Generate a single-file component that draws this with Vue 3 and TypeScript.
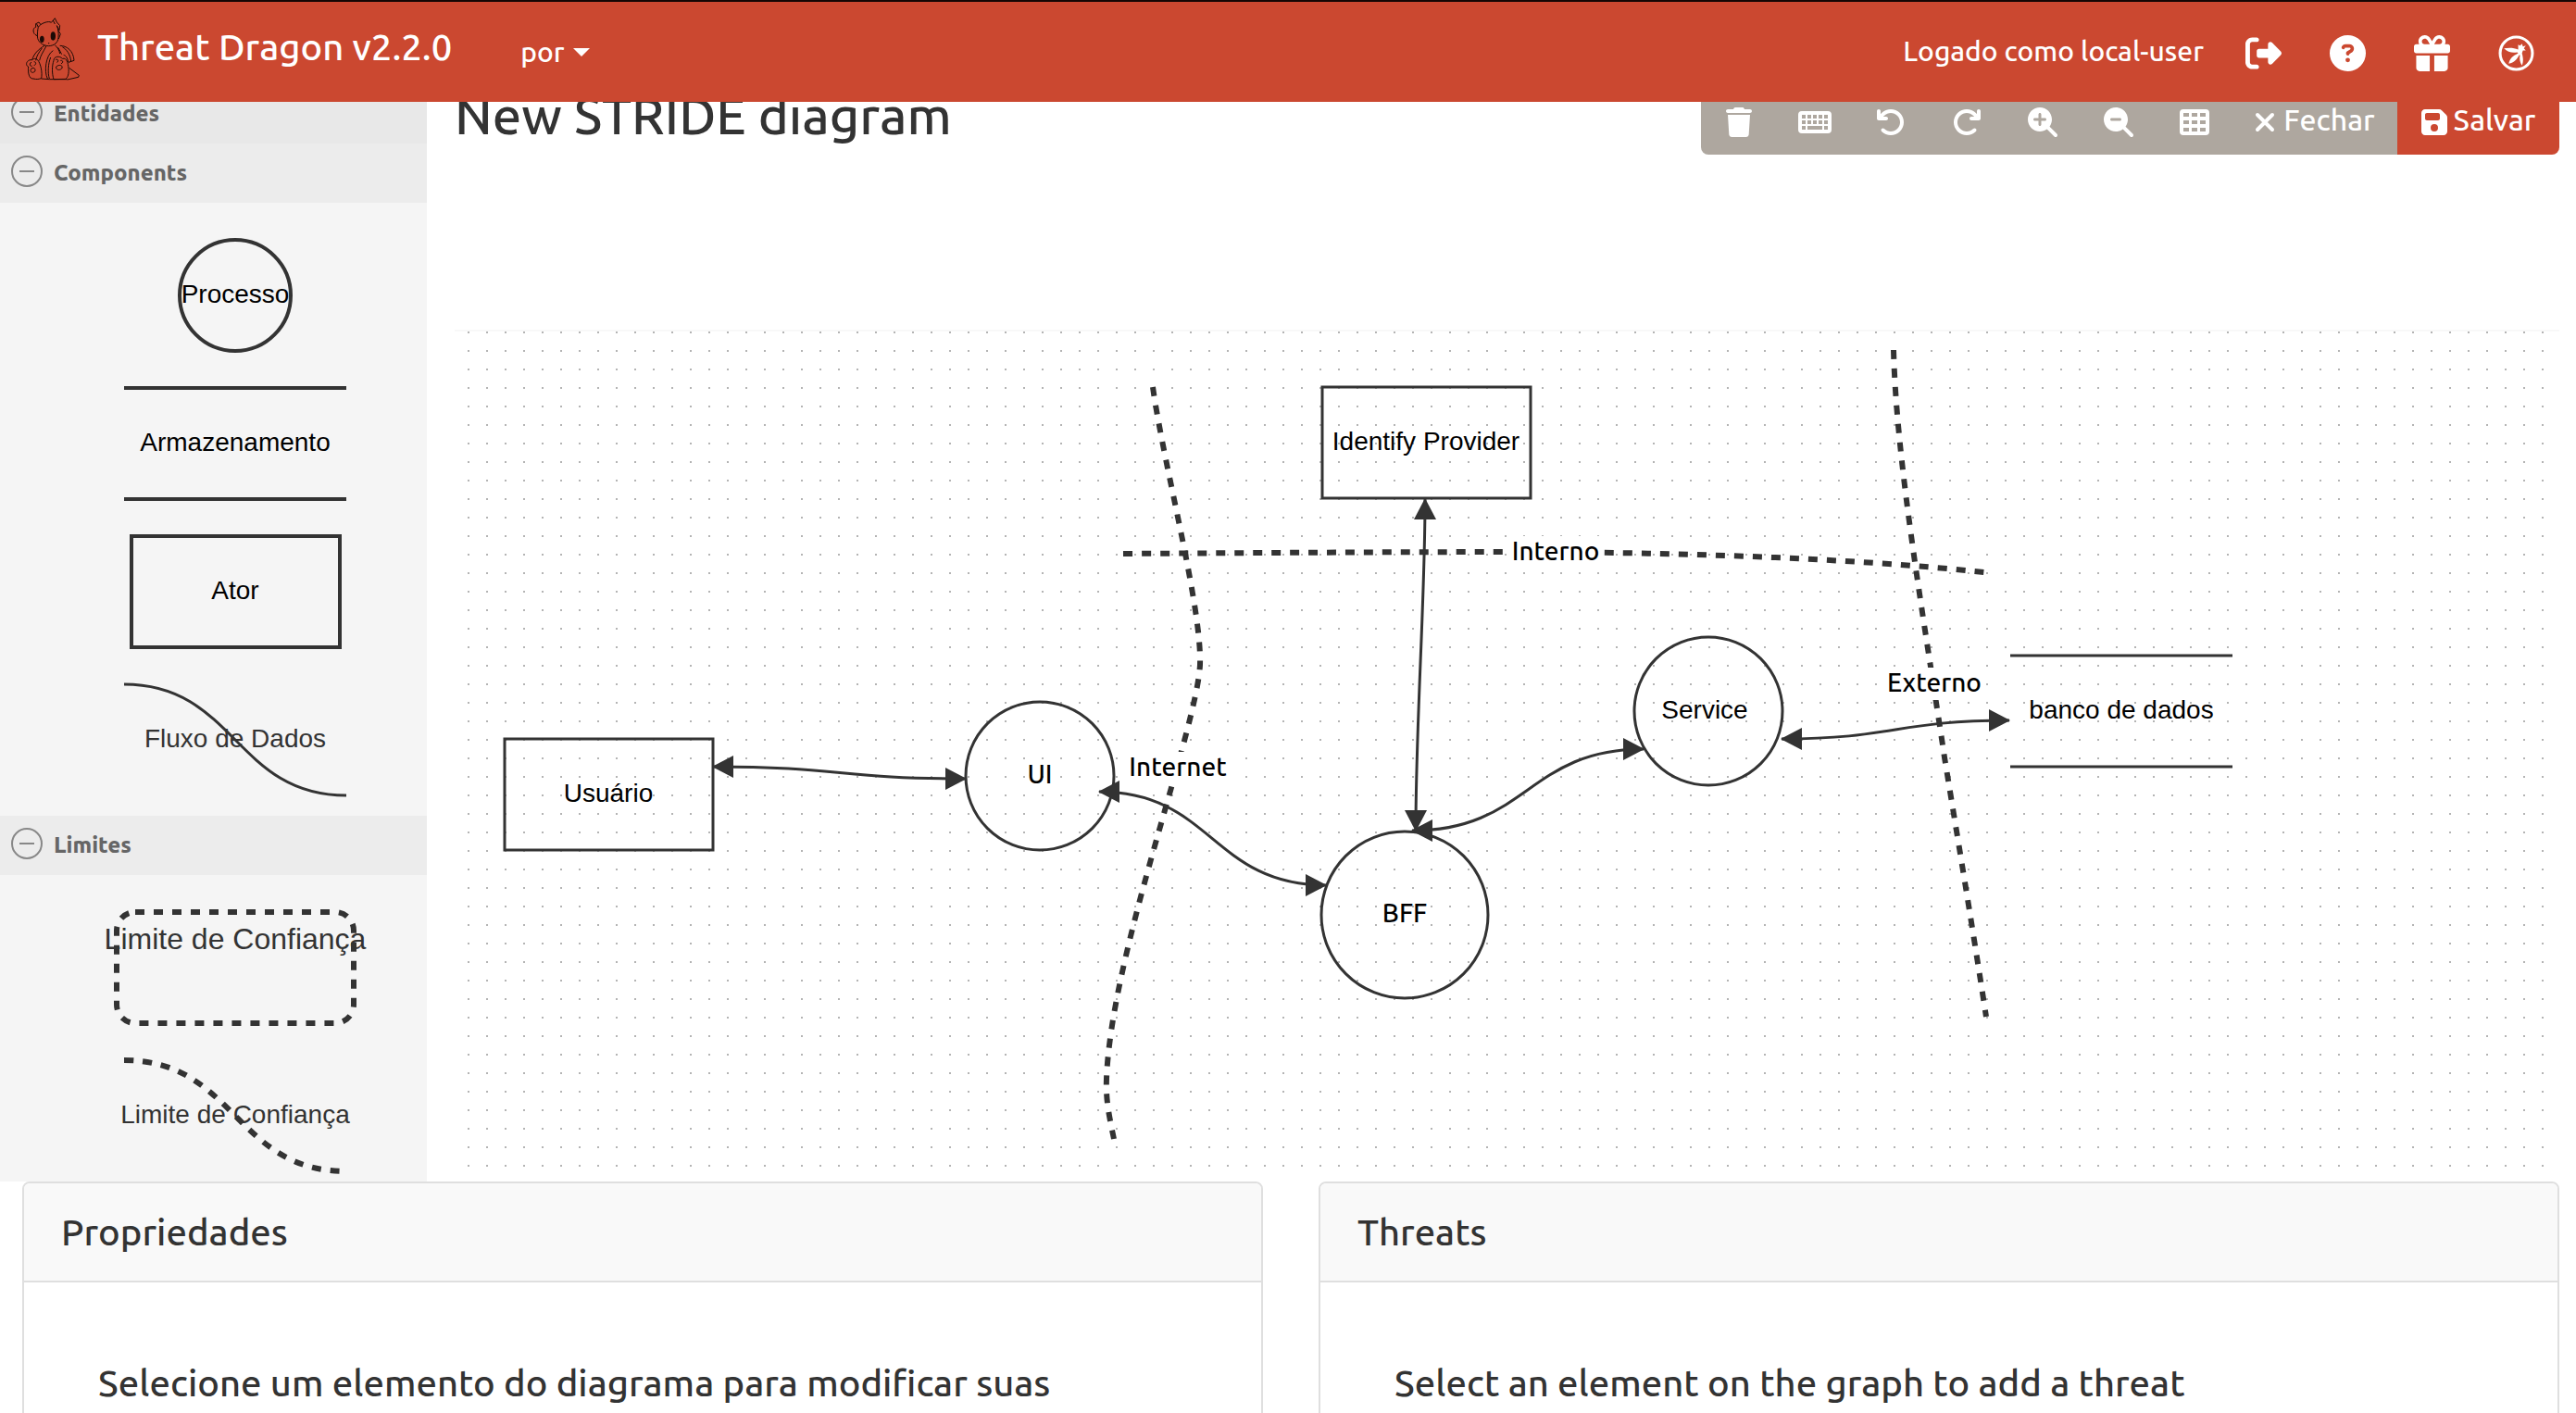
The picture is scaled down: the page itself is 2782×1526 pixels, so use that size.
<script setup lang="ts">
import { ref } from 'vue'

interface Action {
  label: string
  viewBox: string
  path: string
}
interface Flow {
  id: string
  d: string
}
interface Boundary extends Flow {
  name: string
  x: number
  y: number
  width: number
}

const language = ref('por')

const lens =
  'M416 208c0 45.9-14.9 88.3-40 122.7L502.6 457.4c12.5 12.5 12.5 32.8 0 45.3s-32.8 12.5-45.3 0L330.7 376c-34.4 25.2-76.8 40-122.7 40C93.1 416 0 322.9 0 208S93.1 0 208 0S416 93.1 416 208z'

const actions: Action[] = [
  {
    label: 'Excluir',
    viewBox: '-32 0 512 512',
    path: 'M135.2 17.7L128 32 32 32C14.3 32 0 46.3 0 64S14.3 96 32 96l384 0c17.7 0 32-14.3 32-32s-14.3-32-32-32l-96 0-7.2-14.3C307.4 6.8 296.3 0 284.2 0L163.8 0c-12.1 0-23.2 6.8-28.6 17.7zM416 128L32 128 53.2 467c1.6 25.3 22.6 45 47.9 45l245.8 0c25.3 0 46.3-19.7 47.9-45L416 128z',
  },
  {
    label: 'Atalhos',
    viewBox: '2 0 32 32',
    path: 'M4 4h28a4 4 0 0 1 4 4v16a4 4 0 0 1-4 4H4a4 4 0 0 1-4-4V8a4 4 0 0 1 4-4zM4 8v4h4v-4zM10 8v4h4v-4zM16 8v4h4v-4zM22 8v4h4v-4zM28 8v4h4v-4zM4 14v4h4v-4zM10 14v4h4v-4zM16 14v4h4v-4zM22 14v4h4v-4zM28 14v4h4v-4zM4 20v4h4v-4zM10 20v4h16v-4zM28 20v4h4v-4z',
  },
  {
    label: 'Desfazer',
    viewBox: '0 0 512 512',
    path: 'M125.7 160l50.3 0c17.7 0 32 14.3 32 32s-14.3 32-32 32L48 224c-17.7 0-32-14.3-32-32L16 64c0-17.7 14.3-32 32-32s32 14.3 32 32l0 51.2L97.6 97.6c87.5-87.5 229.3-87.5 316.8 0s87.5 229.3 0 316.8s-229.3 87.5-316.8 0c-12.5-12.5-12.5-32.8 0-45.3s32.8-12.5 45.3 0c62.5 62.5 163.8 62.5 226.3 0s62.5-163.8 0-226.3s-163.8-62.5-226.3 0L125.7 160z',
  },
  {
    label: 'Refazer',
    viewBox: '0 0 512 512',
    path: 'M386.3 160L336 160c-17.7 0-32 14.3-32 32s14.3 32 32 32l128 0c17.7 0 32-14.3 32-32l0-128c0-17.7-14.3-32-32-32s-32 14.3-32 32l0 51.2L414.4 97.6c-87.5-87.5-229.3-87.5-316.8 0s-87.5 229.3 0 316.8s229.3 87.5 316.8 0c12.5-12.5 12.5-32.8 0-45.3s-32.8-12.5-45.3 0c-62.5 62.5-163.8 62.5-226.3 0s-62.5-163.8 0-226.3s163.8-62.5 226.3 0L386.3 160z',
  },
  {
    label: 'Aumentar zoom',
    viewBox: '0 0 512 512',
    path: lens + 'M184 296c0 13.3 10.7 24 24 24s24-10.7 24-24l0-64 64 0c13.3 0 24-10.7 24-24s-10.7-24-24-24l-64 0 0-64c0-13.3-10.7-24-24-24s-24 10.7-24 24l0 64-64 0c-13.3 0-24 10.7-24 24s10.7 24 24 24l64 0 0 64z',
  },
  {
    label: 'Diminuir zoom',
    viewBox: '0 0 512 512',
    path: lens + 'M136 184c-13.3 0-24 10.7-24 24s10.7 24 24 24l144 0c13.3 0 24-10.7 24-24s-10.7-24-24-24l-144 0z',
  },
  {
    label: 'Grade',
    viewBox: '0 0 32 32',
    path: 'M4 2h24a4 4 0 0 1 4 4v20a4 4 0 0 1-4 4H4a4 4 0 0 1-4-4V6a4 4 0 0 1 4-4zM4 6v4h6v-4zM13 6v4h6v-4zM22 6v4h6v-4zM4 14v4h6v-4zM13 14v4h6v-4zM22 14v4h6v-4zM4 22v4h6v-4zM13 22v4h6v-4zM22 22v4h6v-4z',
  },
]

const flows: Flow[] = [
  { id: 'user-ui', d: 'M770 828C907 828 907 841 1043 841' },
  { id: 'ui-bff', d: 'M1187 855C1309 855 1309 956 1432 956' },
  { id: 'idp-bff', d: 'M1539 539C1539 650 1529 780 1529 897' },
  { id: 'bff-service', d: 'M1525 897C1650 897 1650 809 1775 809' },
  { id: 'service-db', d: 'M1924 798C2047 798 2047 778 2170 778' },
]

const boundaries: Boundary[] = [
  {
    id: 'internet',
    name: 'Internet',
    x: 1272,
    y: 838,
    width: 110,
    d: 'M1245 418C1257 504 1298 655 1296 718C1292 790 1200 1030 1195 1165C1194 1188 1198 1206 1203 1230',
  },
  {
    id: 'interno',
    name: 'Interno',
    x: 1680,
    y: 605,
    width: 104,
    d: 'M1213 598C1363 597 1510 596 1660 596C1810 597 1990 602 2143 618',
  },
  {
    id: 'externo',
    name: 'Externo',
    x: 2089,
    y: 747,
    width: 106,
    d: 'M2045 378C2048 500 2078 670 2100 818C2115 910 2130 1000 2145 1098',
  },
]

const cards = [
  { title: 'Propriedades', text: 'Selecione um elemento do diagrama para modificar suas' },
  { title: 'Threats', text: 'Select an element on the graph to add a threat' },
]
</script>

<template>
  <div class="app">
    <header class="navbar">
      <a class="brand" href="#">
        <svg class="logo" viewBox="0 0 240 240" aria-hidden="true">
          <g fill="none" stroke="#1c0a06" stroke-width="3" stroke-linejoin="round">
            <path d="M64 52C62 60 60 75 62 88C66 104 84 113 98 113C116 112 128 102 129 86C131 70 128 55 124 47M64 52C70 40 98 30 106 37M64 52L58 40L66 36L72 44M106 37L118 23L124 36L134 47L132 62L124 47M56 52C46 54 46 70 54 76L60 80M56 40L56 52M112 30L118 42M128 62L136 74L130 90" />
            <path d="M84 112C64 124 50 138 44 158M76 120C66 134 58 146 56 160M90 113C80 132 70 146 68 160M44 158C26 156 20 176 32 180C30 200 34 220 48 219C60 222 66 220 74 218C78 200 72 170 62 158C56 152 48 154 44 158M42 166C34 168 36 180 44 178M50 164C58 164 58 174 50 176M42 186C50 180 60 190 50 198C40 202 36 192 42 186" />
            <path d="M112 128C88 142 82 196 94 219M104 150C96 170 94 200 100 219M118 110C126 118 132 126 134 138M134 112C156 112 178 128 180 160L162 166C158 152 154 144 146 142M142 116C156 124 168 140 170 164M128 118L140 140M114 160C114 146 134 144 142 154C158 150 160 170 162 184C164 202 160 216 152 220L114 221C108 202 108 178 114 160M120 158C128 152 132 164 124 166M136 160C144 158 146 168 138 170M122 180C134 170 146 178 140 186C132 194 120 190 122 180M164 184L196 208L194 214L158 222M74 219L100 221L158 221" />
          </g>
          <ellipse cx="76" cy="91" rx="7" ry="11" fill="#1c0a06" />
          <ellipse cx="112" cy="81" rx="8" ry="14" fill="#1c0a06" />
          <circle cx="98" cy="104" r="2" fill="#1c0a06" />
        </svg>
        <span>Threat Dragon v2.2.0</span>
      </a>
      <label class="language">
        <select v-model="language" aria-label="Idioma">
          <option value="por">por</option>
          <option value="eng">eng</option>
        </select>
        <svg width="18" height="9" viewBox="0 0 18 9" aria-hidden="true"><path d="M0 0h18l-9 9z" fill="#fff" /></svg>
      </label>
      <span class="session">Logado como local-user</span>
      <nav class="links">
        <a href="#" aria-label="Sair">
          <svg viewBox="0 0 512 512"><path d="M377.9 105.9L500.7 228.7c7.2 7.2 11.3 17.1 11.3 27.3s-4.1 20.1-11.3 27.3L377.9 406.1c-6.4 6.4-15 9.9-24 9.9c-18.7 0-33.9-15.2-33.9-33.9l0-62.1-128 0c-17.7 0-32-14.3-32-32l0-64c0-17.7 14.3-32 32-32l128 0 0-62.1c0-18.7 15.2-33.9 33.9-33.9c9 0 17.6 3.6 24 9.9zM160 96L96 96c-17.7 0-32 14.3-32 32l0 256c0 17.7 14.3 32 32 32l64 0c17.7 0 32 14.3 32 32s-14.3 32-32 32l-64 0c-53 0-96-43-96-96L0 128C0 75 43 32 96 32l64 0c17.7 0 32 14.3 32 32s-14.3 32-32 32z" /></svg>
        </a>
        <a href="#" aria-label="Ajuda">
          <svg viewBox="0 0 512 512"><path fill-rule="evenodd" d="M256 512A256 256 0 1 0 256 0a256 256 0 1 0 0 512zM169.8 165.3c7.9-22.3 29.1-37.3 52.8-37.3l58.3 0c34.9 0 63.1 28.3 63.1 63.1c0 22.6-12.1 43.5-31.7 54.8L280 264.4c-.2 13-10.9 23.6-24 23.6c-13.3 0-24-10.7-24-24l0-13.5c0-8.6 4.6-16.5 12.1-20.8l44.3-25.4c4.7-2.7 7.6-7.7 7.6-13.1c0-8.4-6.8-15.1-15.1-15.1l-58.3 0c-3.4 0-6.4 2.1-7.5 5.3l-.4 1.2c-4.4 12.5-18.2 19-30.6 14.6s-19-18.2-14.6-30.6l.4-1.2zM224 352a32 32 0 1 1 64 0 32 32 0 1 1 -64 0z" /></svg>
        </a>
        <a href="#" aria-label="Novidades">
          <svg viewBox="0 0 512 512"><path d="M190.5 68.8L225.3 128l-1.3 0-72 0c-22.1 0-40-17.9-40-40s17.9-40 40-40l2.2 0c14.9 0 28.8 7.9 36.3 20.8zM64 88c0 14.4 3.5 28 9.6 40L32 128c-17.7 0-32 14.3-32 32l0 64c0 17.7 14.3 32 32 32l448 0c17.7 0 32-14.3 32-32l0-64c0-17.7-14.3-32-32-32l-41.6 0c6.1-12 9.6-25.6 9.6-40c0-48.6-39.4-88-88-88l-2.2 0c-31.9 0-61.5 16.9-77.7 44.4L256 85.5l-24.1-41C215.7 16.9 186.1 0 154.2 0L152 0C103.4 0 64 39.4 64 88zm336 0c0 22.1-17.9 40-40 40l-72 0-1.3 0 34.8-59.2C329.1 55.9 342.9 48 357.8 48l2.2 0c22.1 0 40 17.9 40 40zM32 288l0 176c0 26.5 21.5 48 48 48l144 0 0-224L32 288zM288 512l144 0c26.5 0 48-21.5 48-48l0-176-192 0 0 224z" /></svg>
        </a>
        <a href="#" aria-label="OWASP">
          <svg viewBox="0 0 38 38">
            <circle cx="19" cy="19" r="17" fill="none" stroke="#fff" stroke-width="3" />
            <path d="M21 10l2 1l2-2l1 3l3-1l-2 3l2 2l-3 0l-1 3c1 4 2 8 0 13c-2-3-3-7-2-11l-1 0c-2 4-5 8-11 9c1-5 4-8 10-11l-1-1c-5 1-10 0-14-4c5-1 10-1 15 1z" />
          </svg>
        </a>
      </nav>
    </header>

    <main class="content">
      <div class="workspace">
        <aside class="stencil">
          <button class="group group-first" type="button">
            <svg width="36" height="36" viewBox="0 0 36 36" aria-hidden="true"><circle cx="18" cy="18" r="16" /><path d="M10 18h16" /></svg>
            <span>Entidades</span>
          </button>
          <button class="group" type="button">
            <svg width="36" height="36" viewBox="0 0 36 36" aria-hidden="true"><circle cx="18" cy="18" r="16" /><path d="M10 18h16" /></svg>
            <span>Components</span>
          </button>
          <svg class="shapes" width="461" height="662" viewBox="0 0 461 662">
            <g fill="none" stroke="#333" stroke-width="4">
              <circle cx="254" cy="100" r="60" />
              <path d="M134 200h240M134 320h240" />
              <rect x="142" y="360" width="225" height="120" />
              <path d="M134 520C254 520 254 640 374 640" stroke-width="3" />
            </g>
            <text x="254" y="108">Processo</text>
            <text x="254" y="268">Armazenamento</text>
            <text x="254" y="428">Ator</text>
            <text x="254" y="588" class="soft">Fluxo de Dados</text>
          </svg>
          <button class="group" type="button">
            <svg width="36" height="36" viewBox="0 0 36 36" aria-hidden="true"><circle cx="18" cy="18" r="16" /><path d="M10 18h16" /></svg>
            <span>Limites</span>
          </button>
          <svg class="shapes" width="461" height="331" viewBox="0 0 461 331">
            <g class="dashed">
              <rect x="126" y="40" width="256" height="120" rx="20" />
              <path d="M134 200C254 200 254 320 374 320" />
            </g>
            <text x="254" y="80" class="soft large">Limite de Confiança</text>
            <text x="254" y="268" class="soft">Limite de Confiança</text>
          </svg>
        </aside>

        <section class="editor">
          <div class="titlebar">
            <h1>New STRIDE diagram</h1>
            <div class="toolbar">
              <button v-for="a in actions" :key="a.label" type="button" class="tool" :aria-label="a.label">
                <svg :viewBox="a.viewBox"><path fill-rule="evenodd" :d="a.path" /></svg>
              </button>
              <button type="button" class="tool close">
                <svg class="cross" viewBox="0 0 22 22"><path d="M3 3l16 16M19 3l-16 16" /></svg>
                <span>Fechar</span>
              </button>
              <button type="button" class="tool save">
                <svg class="floppy" viewBox="0 0 448 512"><path fill-rule="evenodd" d="M64 32C28.7 32 0 60.7 0 96L0 416c0 35.3 28.7 64 64 64l320 0c35.3 0 64-28.7 64-64l0-242.7c0-17-6.7-33.3-18.7-45.3L352 50.7C340 38.7 323.7 32 306.7 32L64 32zm0 96c0-17.7 14.3-32 32-32l192 0c17.7 0 32 14.3 32 32l0 64c0 17.7-14.3 32-32 32L96 224c-17.7 0-32-14.3-32-32l0-64zM224 288a64 64 0 1 1 0 128 64 64 0 1 1 0-128z" /></svg>
                <span>Salvar</span>
              </button>
            </div>
          </div>

          <svg class="canvas">
            <defs>
              <pattern id="dots" x="14" y="0" width="20" height="20" patternUnits="userSpaceOnUse">
                <rect width="2" height="2" fill="#b4b4b4" />
              </pattern>
              <marker id="arrow" markerUnits="userSpaceOnUse" markerWidth="24" markerHeight="24" refX="22" refY="12" orient="auto-start-reverse">
                <path d="M0 0L23 12L0 24z" fill="#333" />
              </marker>
            </defs>
            <rect width="100%" height="100%" fill="url(#dots)" />
            <g transform="translate(-491 -358)">
              <g class="node">
                <rect x="545" y="798" width="225" height="120" />
                <circle cx="1123" cy="838" r="80" />
                <rect x="1428" y="418" width="225" height="120" />
                <circle cx="1517" cy="988" r="90" />
                <circle cx="1845" cy="768" r="80" />
                <path d="M2171 708h240M2171 828h240" />
              </g>
              <g class="dashed">
                <path v-for="b in boundaries" :key="b.id" :d="b.d" />
              </g>
              <g class="node">
                <path v-for="f in flows" :key="f.id" :d="f.d" marker-start="url(#arrow)" marker-end="url(#arrow)" />
              </g>
              <g v-for="b in boundaries" :key="b.id">
                <rect :x="b.x - b.width / 2" :y="b.y - 26" :width="b.width" height="35" fill="#fff" />
                <text :x="b.x" :y="b.y" class="label">{{ b.name }}</text>
              </g>
              <text x="657" y="866">Usuário</text>
              <text x="1123" y="846" class="label">UI</text>
              <text x="1540" y="486">Identify Provider</text>
              <text x="1517" y="996" class="label">BFF</text>
              <text x="1841" y="776">Service</text>
              <text x="2291" y="776">banco de dados</text>
            </g>
          </svg>
        </section>
      </div>

      <div class="cards">
        <section v-for="c in cards" :key="c.title" class="card">
          <h2>{{ c.title }}</h2>
          <p>{{ c.text }}</p>
        </section>
      </div>
    </main>
  </div>
</template>

<style>
body {
  margin: 0;
}
</style>

<style scoped>
.app {
  height: 100vh;
  overflow: hidden;
  background: #fff;
  color: #333;
  font-family: Ubuntu, 'Noto Sans', sans-serif;
  font-weight: 480;
}
.navbar {
  position: relative;
  z-index: 1;
  display: flex;
  align-items: center;
  height: 110px;
  padding: 0 45px 0 20px;
  box-sizing: border-box;
  border-top: 2px solid #150604;
  background: #cb4830;
  color: #fff;
  font-size: 30px;
}
.brand {
  display: flex;
  align-items: center;
  gap: 5px;
  margin-bottom: 8px;
  color: #fff;
  font-size: 40px;
  text-decoration: none;
}
.logo {
  width: 80px;
  height: 80px;
}
.brand span {
  padding-bottom: 4px;
}
.language {
  display: flex;
  align-items: center;
  gap: 9px;
  margin-left: 74px;
}
.language select {
  appearance: none;
  field-sizing: content;
  padding: 0;
  border: 0;
  background: none;
  color: #fff;
  font: inherit;
}
.session {
  margin-left: auto;
  padding-bottom: 2px;
}
.links {
  display: flex;
  gap: 52px;
  margin-left: 45px;
  padding-top: 2px;
}
.links svg {
  display: block;
  width: 39px;
  height: 39px;
  fill: #fff;
}
.content {
  display: flex;
  flex-direction: column;
  margin-top: -19px;
}
.workspace {
  display: flex;
  gap: 30px;
  padding-right: 18px;
}
.stencil {
  width: 461px;
  flex: none;
  background: #f5f5f5;
}
.group {
  display: flex;
  align-items: center;
  gap: 11px;
  width: 100%;
  height: 64px;
  padding: 0 11px 4px;
  border: 0;
  background: #ececec;
  color: #666;
  font: 800 24px Ubuntu, 'Noto Sans', sans-serif;
}
.group span {
  padding-top: 2px;
}
.group-first {
  background: #e8e8e8;
}
.group svg {
  fill: none;
  stroke: #888;
  stroke-width: 2;
}
.shapes {
  display: block;
  width: 100%;
}
text {
  font: 28px 'Liberation Sans', Arial, sans-serif;
  text-anchor: middle;
  fill: #000;
}
text.soft {
  fill: #333;
}
text.large {
  font-size: 32px;
}
text.label {
  font-family: Ubuntu, 'Noto Sans', sans-serif;
  font-size: 28px;
  font-weight: 480;
}
.dashed {
  fill: none;
  stroke: #333;
  stroke-width: 6;
  stroke-dasharray: 10 10;
}
.node {
  fill: none;
  stroke: #333;
  stroke-width: 3;
}
.editor {
  flex: 1;
  min-width: 0;
  display: flex;
  flex-direction: column;
}
.titlebar {
  display: flex;
  justify-content: space-between;
  align-items: flex-start;
  height: 265px;
  border-bottom: 2px solid #f8f8f8;
}
h1 {
  margin: 0;
  font-size: 56px;
  font-weight: 480;
  line-height: 68px;
}
.toolbar {
  display: flex;
  overflow: hidden;
  border-radius: 8px;
}
.tool {
  display: flex;
  align-items: center;
  justify-content: center;
  gap: 9px;
  width: 82px;
  height: 76px;
  padding: 6px 0 0;
  border: 0;
  background: #aea79f;
  color: #fff;
  font: 480 32px Ubuntu, 'Noto Sans', sans-serif;
}
.tool svg {
  width: 32px;
  height: 32px;
  overflow: visible;
  fill: #fff;
}
.tool span {
  padding-bottom: 6px;
}
.close {
  width: 178px;
}
.save {
  width: 175px;
  gap: 7px;
  background: #cb4830;
}
.tool .cross {
  width: 22px;
  height: 22px;
  stroke: #fff;
  stroke-width: 4;
  stroke-linecap: round;
}
.tool .floppy {
  width: 28px;
}
.canvas {
  display: block;
  width: 100%;
  flex: 1;
}
.cards {
  display: flex;
  gap: 60px;
  padding: 0 18px 0 24px;
}
.card {
  flex: 1;
  min-height: 400px;
  border: 2px solid #dfdfdf;
  border-radius: 8px;
  overflow: hidden;
}
.card h2 {
  margin: 0;
  padding: 25px 40px 24px;
  border-bottom: 2px solid #dfdfdf;
  background: #f9f9f9;
  font-size: 40px;
  font-weight: 480;
  line-height: 56px;
}
.card p {
  margin: 0;
  padding: 81px 80px;
  font-size: 40px;
  line-height: 56px;
}
</style>
